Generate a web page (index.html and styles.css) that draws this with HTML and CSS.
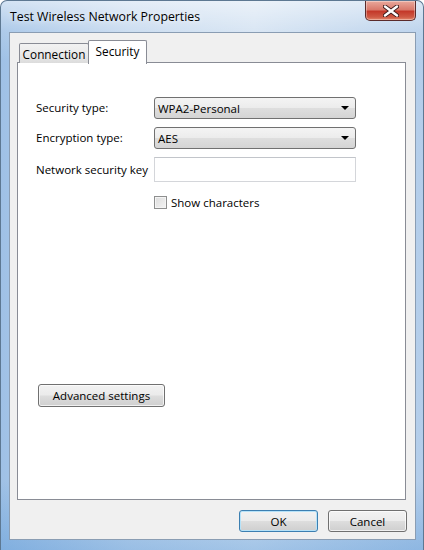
FILE: index.html
```html
<!DOCTYPE html>
<html>
<head>
<meta charset="utf-8">
<link rel="stylesheet" href="styles.css">
</head>
<body>
<div class="window">
  <div class="titlebar">
    <div class="title">Test Wireless Network Properties</div>
    <div class="close">
      <svg width="16" height="12" viewBox="0 0 16 12">
        <path d="M2 1.5 L14 10.5 M14 1.5 L2 10.5" stroke="#3a1a1a" stroke-width="4.2" stroke-linecap="round"/>
        <path d="M2 1.5 L14 10.5 M14 1.5 L2 10.5" stroke="#ffffff" stroke-width="2.4" stroke-linecap="round"/>
      </svg>
    </div>
  </div>
  <div class="client">
    <div class="tabs">
      <div class="tab">Connection</div>
      <div class="tab active">Security</div>
    </div>
    <div class="panel">
      <div class="form">
        <div class="label">Security type:</div>
        <div class="select"><span>WPA2-Personal</span><span class="arrow"></span></div>
        <div class="label">Encryption type:</div>
        <div class="select"><span>AES</span><span class="arrow"></span></div>
        <div class="label">Network security key</div>
        <div class="input"></div>
        <div></div>
        <div class="check"><span class="box"></span><span>Show characters</span></div>
      </div>
      <div class="btn adv">Advanced settings</div>
    </div>
    <div class="actions">
      <div class="btn ok">OK</div>
      <div class="btn">Cancel</div>
    </div>
  </div>
</div>
</body>
</html>
```
FILE: styles.css
```css
html, body {
  margin: 0;
  padding: 0;
  background: #ffffff;
}
body {
  width: 424px;
  height: 550px;
  overflow: hidden;
  font-family: "Segoe UI", "Open Sans", "Liberation Sans", sans-serif;
  font-size: 11.5px;
  color: #000;
}
.window {
  box-sizing: border-box;
  width: 424px;
  height: 550px;
  padding: 0 7px 10px 8px;
  border-radius: 7px 7px 0 0;
  border: 1px solid #5d7892;
  border-bottom: none;
  background:
    linear-gradient(180deg, rgba(255,255,255,0.55) 0px, rgba(255,255,255,0.15) 30px, rgba(255,255,255,0) 60px, rgba(0,0,0,0) 480px, rgba(70,140,210,0.35) 550px),
    linear-gradient(90deg, #9fc1e6 0%, #c4d8ee 30%, #d3e2f2 60%, #b3cdea 100%);
  display: flex;
  flex-direction: column;
}
.titlebar {
  height: 31px;
  display: flex;
  align-items: flex-start;
}
.title {
  padding: 7px 0 0 1px;
  font-size: 12.3px;
  color: #000;
  text-shadow: 0 0 6px rgba(255,255,255,0.9);
}
.close {
  margin-left: auto;
  width: 49px;
  height: 19px;
  border: 1px solid #5a2b2b;
  border-top: none;
  border-radius: 0 0 5px 5px;
  background: linear-gradient(180deg, #e9a99c 0%, #d97a6c 45%, #c4392a 55%, #cf5a45 85%, #e48a6e 100%);
  display: flex;
  align-items: center;
  justify-content: center;
  box-shadow: inset 0 0 0 1px rgba(255,255,255,0.35);
}
.client {
  flex: 1;
  background: #f0f0f0;
  border: 1px solid #8a9db3;
  display: flex;
  flex-direction: column;
  padding: 7px 8px 7px 7px;
}
.tabs {
  display: flex;
  align-items: flex-end;
  padding-left: 2px;
  height: 23px;
  position: relative;
  z-index: 1;
}
.tab {
  box-sizing: border-box;
  height: 20px;
  padding: 0 5px;
  width: 70px;
  border: 1px solid #898c95;
  border-bottom: none;
  border-radius: 2px 2px 0 0;
  background: linear-gradient(180deg, #f2f2f2 0%, #ebebeb 50%, #dcdcdc 100%);
  display: flex;
  align-items: center;
  justify-content: center;
  font-size: 11.8px;
  padding-top: 1px;
}
.tab.active {
  width: 59px;
  margin-left: -1px;
  background: #ffffff;
  padding-bottom: 4px;
  margin-bottom: -1px;
  height: 24px;
}
.panel {
  flex: 1;
  margin-top: -1px;
  margin-right: 1px;
  background: #ffffff;
  border: 1px solid #898c95;
  display: flex;
  flex-direction: column;
  align-items: flex-start;
  padding: 34px 0 0 18px;
}
.form {
  display: grid;
  grid-template-columns: 118px 202px;
  grid-template-rows: 22px 22px 25px 24px;
  row-gap: 8px;
  align-items: center;
}
.label {
  padding-bottom: 1px;
}
.select {
  box-sizing: border-box;
  height: 22px;
  border: 1px solid #707070;
  border-radius: 3px;
  background: linear-gradient(180deg, #f4f4f4 0%, #ececec 48%, #dedede 52%, #d4d4d4 100%);
  display: flex;
  align-items: center;
  padding: 0 6px 0 3px;
  justify-content: space-between;
}
.arrow {
  width: 0;
  height: 0;
  border-left: 4px solid transparent;
  border-right: 4px solid transparent;
  border-top: 4px solid #000;
}
.input {
  box-sizing: border-box;
  height: 25px;
  border: 1px solid #d4d6da;
  border-top-color: #c2c5ca;
  background: #fff;
}
.check {
  display: flex;
  align-items: center;
  gap: 4px;
}
.box {
  box-sizing: border-box;
  width: 13px;
  height: 13px;
  border: 1px solid #8e8f8f;
  background: linear-gradient(135deg, #dcdcdc 0%, #f4f4f4 100%);
  box-shadow: inset 0 0 0 1px #f4f4f4;
}
.btn {
  box-sizing: border-box;
  height: 23px;
  border: 1px solid #707070;
  border-radius: 3px;
  background: linear-gradient(180deg, #f2f2f2 0%, #ebebeb 48%, #dddddd 52%, #cfcfcf 100%);
  box-shadow: inset 0 0 0 1px rgba(255,255,255,0.7);
  display: flex;
  align-items: center;
  justify-content: center;
  font-size: 11.5px;
}
.adv {
  margin-top: 170px;
  margin-left: 2px;
  width: 127px;
}
.actions {
  display: flex;
  justify-content: flex-end;
  gap: 10px;
  margin-top: 10px;
}
.actions .btn {
  width: 79px;
  height: 22px;
}
.btn.ok {
  border-color: #3c7fb1;
  box-shadow: inset 0 0 0 1px #b6e2f8;
}
```
